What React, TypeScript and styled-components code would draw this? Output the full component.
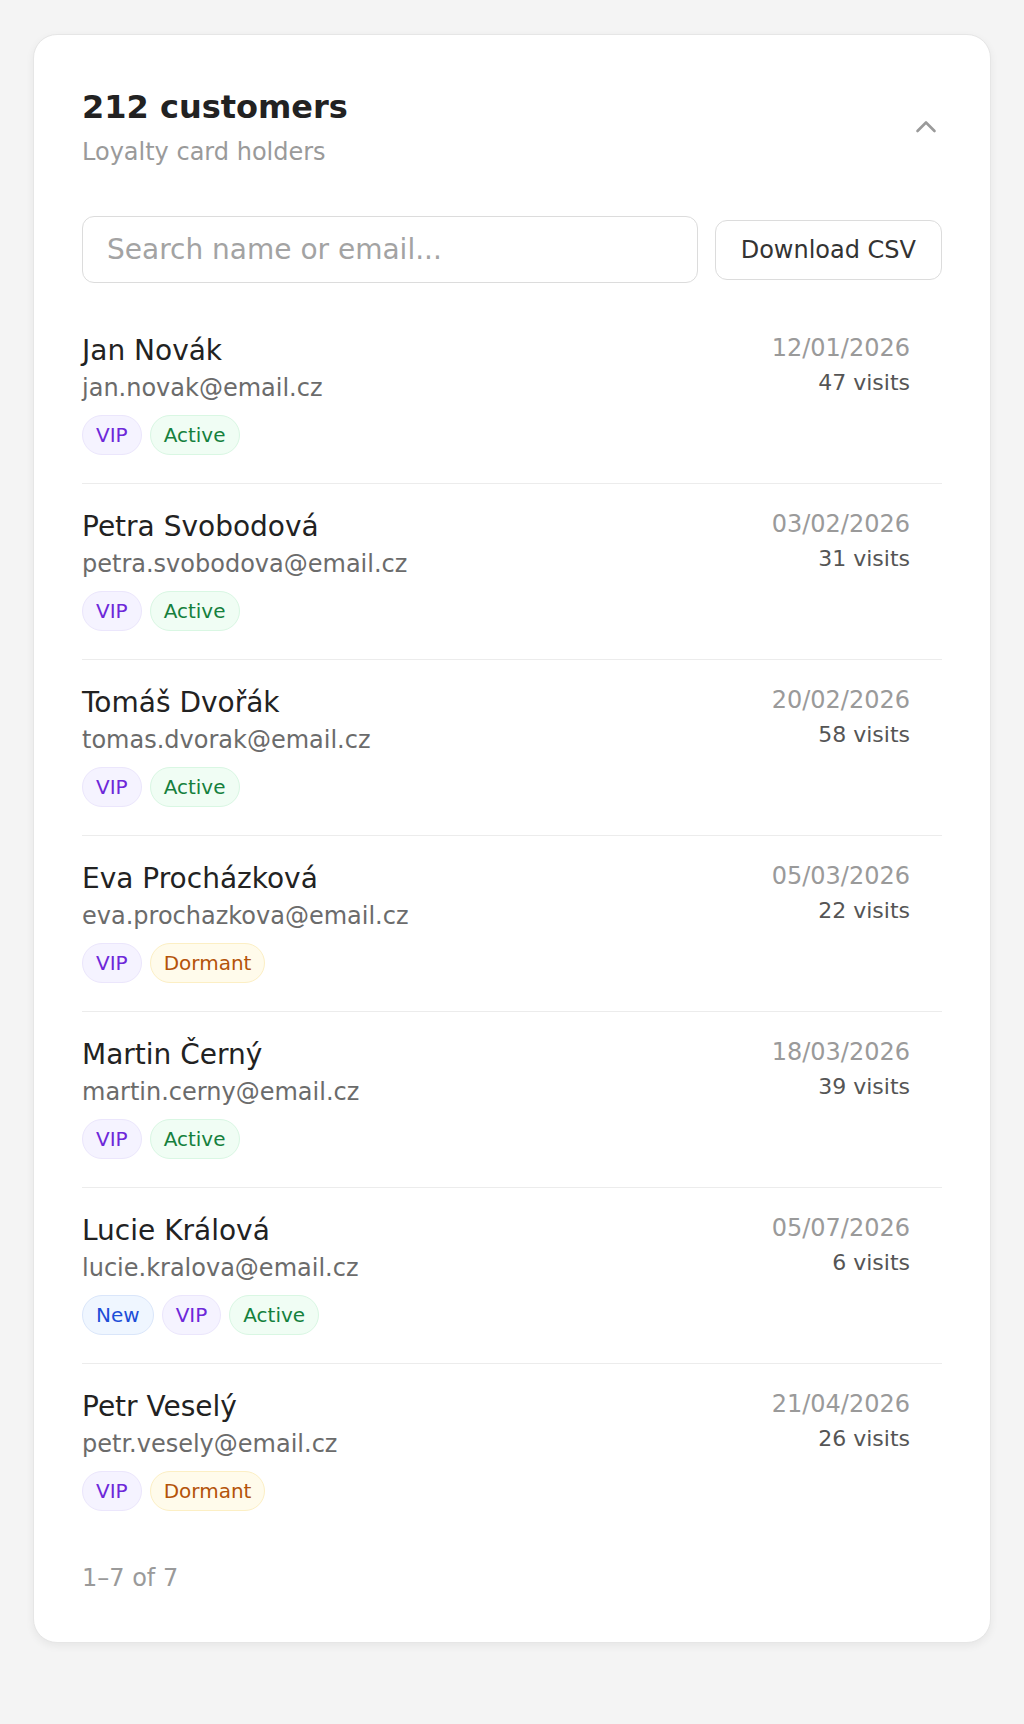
import {FC} from "react";
import styled, {createGlobalStyle} from "styled-components";

type TagKind = "VIP" | "Active" | "Dormant" | "New";

type Customer = {
    name: string;
    email: string;
    date: string;
    visits: number;
    tags: TagKind[];
}

const customers: Customer[] = [
    {name: "Jan Novák", email: "jan.novak@email.cz", date: "12/01/2026", visits: 47, tags: ["VIP", "Active"]},
    {name: "Petra Svobodová", email: "petra.svobodova@email.cz", date: "03/02/2026", visits: 31, tags: ["VIP", "Active"]},
    {name: "Tomáš Dvořák", email: "tomas.dvorak@email.cz", date: "20/02/2026", visits: 58, tags: ["VIP", "Active"]},
    {name: "Eva Procházková", email: "eva.prochazkova@email.cz", date: "05/03/2026", visits: 22, tags: ["VIP", "Dormant"]},
    {name: "Martin Černý", email: "martin.cerny@email.cz", date: "18/03/2026", visits: 39, tags: ["VIP", "Active"]},
    {name: "Lucie Králová", email: "lucie.kralova@email.cz", date: "05/07/2026", visits: 6, tags: ["New", "VIP", "Active"]},
    {name: "Petr Veselý", email: "petr.vesely@email.cz", date: "21/04/2026", visits: 26, tags: ["VIP", "Dormant"]},
];

const tagColors: Record<TagKind, { bg: string; fg: string; border: string }> = {
    VIP: {bg: "#f5f3ff", fg: "#6d28d9", border: "#ebe6fc"},
    Active: {bg: "#f0fdf4", fg: "#15803d", border: "#d9f7e3"},
    Dormant: {bg: "#fffbeb", fg: "#b45309", border: "#fcefc4"},
    New: {bg: "#eff6ff", fg: "#1d4ed8", border: "#dae6fa"},
};

const GlobalStyle = createGlobalStyle`
  html, body {
    margin: 0;
    padding: 0;
    background: #f4f4f4;
  }

  body {
    font-family: "DejaVu Sans", "Noto Sans", sans-serif;
    color: #222;
  }
`

const Page = styled.div`
  min-height: 100vh;
  padding: 34px 33px;
  box-sizing: border-box;
`

const Card = styled.section`
  background: #fff;
  border: 1px solid #e6e6e6;
  border-radius: 24px;
  padding: 48px 48px 50px;
  box-shadow: 0 3px 8px rgba(0, 0, 0, 0.06);
`

const Header = styled.header`
  display: flex;
  align-items: center;
  justify-content: space-between;
`

const Title = styled.h1`
  margin: 0;
  font-size: 32px;
  line-height: 48px;
  font-weight: 700;
  color: #222;
`

const Subtitle = styled.div`
  margin-top: 5px;
  font-size: 24px;
  line-height: 32px;
  color: #9a9a9a;
`

const CollapseButton = styled.button`
  width: 32px;
  height: 32px;
  padding: 0;
  border: none;
  background: none;
  display: flex;
  align-items: center;
  justify-content: center;
  color: #9a9a9a;
`

const Toolbar = styled.div`
  margin-top: 48px;
  display: flex;
  align-items: center;
  gap: 17px;
`

const SearchInput = styled.input`
  flex: 1;
  min-width: 0;
  font-family: inherit;
  font-size: 28px;
  line-height: 33px;
  padding: 16px 24px;
  border: 1px solid #dcdcdc;
  border-radius: 12px;
  color: #222;
  outline: none;

  &::placeholder {
    color: #a3a3a3;
  }
`

const CsvButton = styled.button`
  font-family: inherit;
  font-size: 24px;
  line-height: 28px;
  padding: 15px 25px;
  background: #fff;
  color: #333;
  border: 1px solid #dcdcdc;
  border-radius: 12px;
`

const List = styled.ul`
  list-style: none;
  margin: 25px 0 0;
  padding: 0;
`

const Row = styled.li`
  display: flex;
  justify-content: space-between;
  align-items: flex-start;
  padding: 26px 32px 28px 0;
  border-bottom: 1px solid #ececec;

  &:last-child {
    border-bottom: none;
  }
`

const Info = styled.div`
  display: flex;
  flex-direction: column;
`

const Name = styled.div`
  font-size: 28px;
  line-height: 33px;
  color: #222;
`

const Email = styled.div`
  margin-top: 7px;
  font-size: 24px;
  line-height: 28px;
  color: #6b6b6b;
`

const Tags = styled.div`
  margin-top: 13px;
  display: flex;
  gap: 8px;
`

const Tag = styled.span<{ $kind: TagKind }>`
  font-size: 20px;
  line-height: 24px;
  padding: 7px 13px;
  border-radius: 999px;
  background: ${p => tagColors[p.$kind].bg};
  color: ${p => tagColors[p.$kind].fg};
  border: 1px solid ${p => tagColors[p.$kind].border};
`

const Meta = styled.div`
  display: flex;
  flex-direction: column;
  align-items: flex-end;
`

const DateText = styled.div`
  font-size: 24px;
  line-height: 28px;
  color: #9a9a9a;
`

const Visits = styled.div`
  margin-top: 8px;
  font-size: 22px;
  line-height: 26px;
  color: #555;
`

const Footer = styled.div`
  margin-top: 25px;
  font-size: 24px;
  line-height: 28px;
  color: #9a9a9a;
`

const ChevronUp: FC = () => (
    <svg width="22" height="14" viewBox="0 0 22 14" fill="none">
        <polyline points="2.5,12 11,3.5 19.5,12" stroke="currentColor" strokeWidth="2.6"
                  strokeLinecap="round" strokeLinejoin="round"/>
    </svg>
);

export default function App() {
    return (
        <Page>
            <GlobalStyle/>
            <Card>
                <Header>
                    <div>
                        <Title>212 customers</Title>
                        <Subtitle>Loyalty card holders</Subtitle>
                    </div>
                    <CollapseButton aria-label="Collapse">
                        <ChevronUp/>
                    </CollapseButton>
                </Header>

                <Toolbar>
                    <SearchInput placeholder="Search name or email..."/>
                    <CsvButton>Download CSV</CsvButton>
                </Toolbar>

                <List>
                    {customers.map(c => (
                        <Row key={c.email}>
                            <Info>
                                <Name>{c.name}</Name>
                                <Email>{c.email}</Email>
                                <Tags>
                                    {c.tags.map(t => <Tag key={t} $kind={t}>{t}</Tag>)}
                                </Tags>
                            </Info>
                            <Meta>
                                <DateText>{c.date}</DateText>
                                <Visits>{c.visits} visits</Visits>
                            </Meta>
                        </Row>
                    ))}
                </List>

                <Footer>1–7 of 7</Footer>
            </Card>
        </Page>
    );
}
